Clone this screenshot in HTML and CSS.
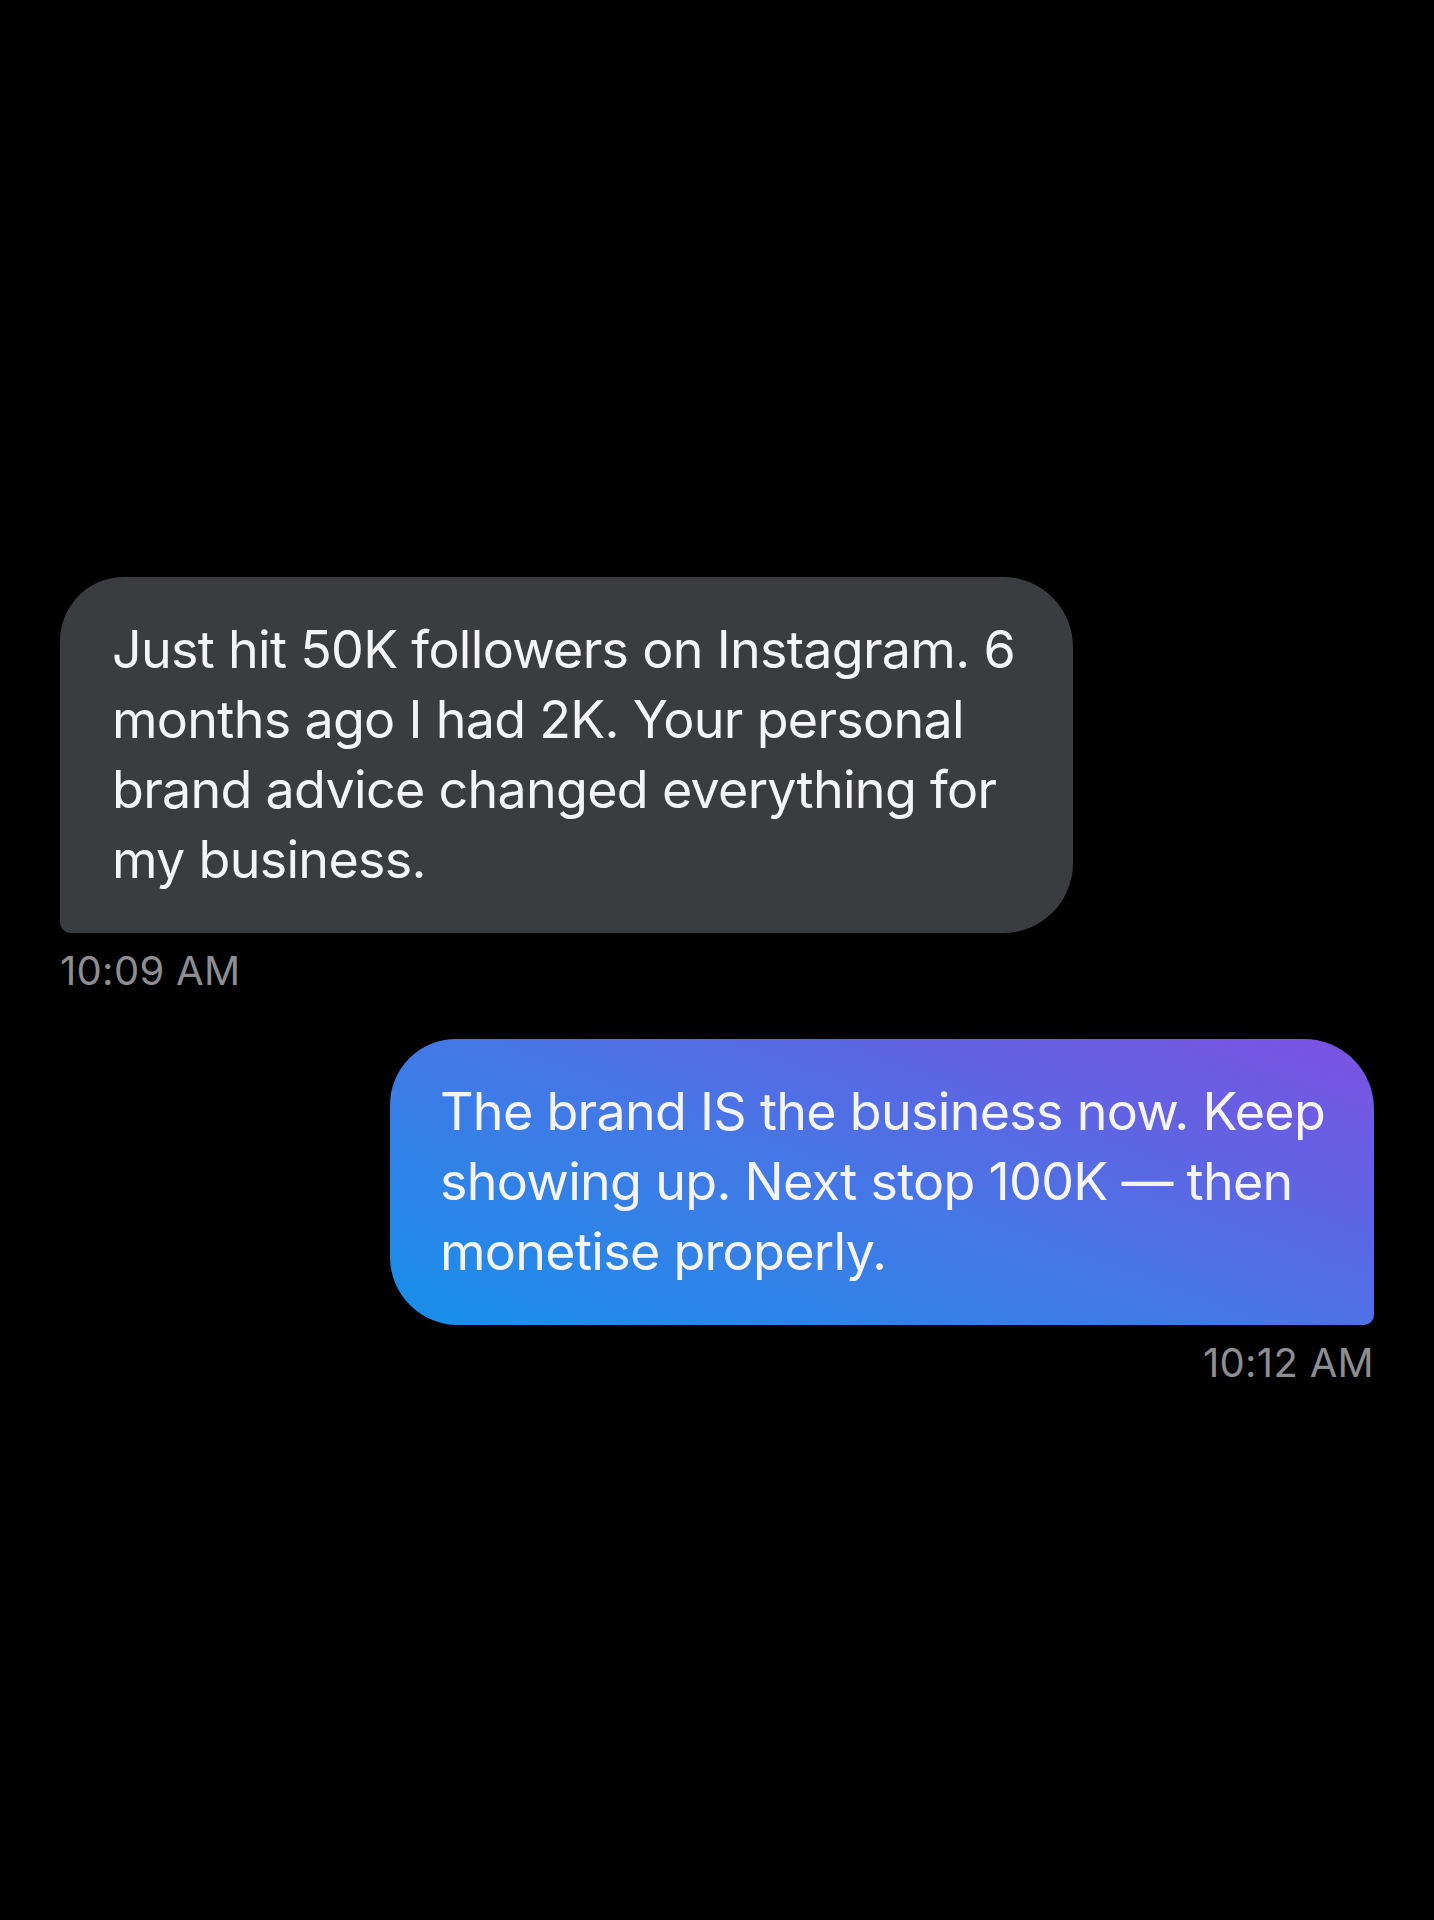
FILE: index.html
```html
<!DOCTYPE html>
<html lang="en">
<head>
<meta charset="utf-8">
<title>Messages</title>
<link rel="stylesheet" href="styles.css">
</head>
<body>
<main class="chat">
  <div class="msg msg-in">
    <div class="bubble bubble-in">Just hit 50K followers on Instagram. 6 months ago I had 2K. Your personal brand advice changed everything for my business.</div>
    <div class="time">10:09 AM</div>
  </div>
  <div class="msg msg-out">
    <div class="bubble bubble-out">The brand IS the business now. Keep showing up. Next stop 100K — then monetise properly.</div>
    <div class="time">10:12 AM</div>
  </div>
</main>
</body>
</html>
```
FILE: styles.css
```css
html, body {
  margin: 0;
  padding: 0;
  background: #000;
}
body {
  width: 1434px;
  height: 1920px;
  font-family: Inter, "Noto Sans", "Liberation Sans", sans-serif;
  -webkit-font-smoothing: antialiased;
}
.chat {
  display: flex;
  flex-direction: column;
  padding: 577px 60px 0;
  gap: 45px;
}
.msg {
  display: flex;
  flex-direction: column;
}
.msg-in { align-self: flex-start; align-items: flex-start; }
.msg-out { align-self: flex-end; align-items: flex-end; }
.bubble {
  box-sizing: border-box;
  color: #f4f4f6;
  font-size: 52px;
  line-height: 70px;
  letter-spacing: -0.7px;
  padding: 38px 40px 38px 52px;
}
.bubble-in {
  width: 1013px;
  background: #3a3c40;
  border-radius: 64px 70px 70px 11px;
}
.bubble-out {
  width: 984px;
  padding-left: 50px;
  background: linear-gradient(20deg, #1690ea 0%, #4279e6 45%, #6262e2 75%, #7d52e2 100%);
  border-radius: 66px 70px 10px 68px;
}
.time {
  margin-top: 15px;
  color: #8d8d92;
  font-size: 40px;
  line-height: 46px;
  letter-spacing: 0.3px;
}
```
